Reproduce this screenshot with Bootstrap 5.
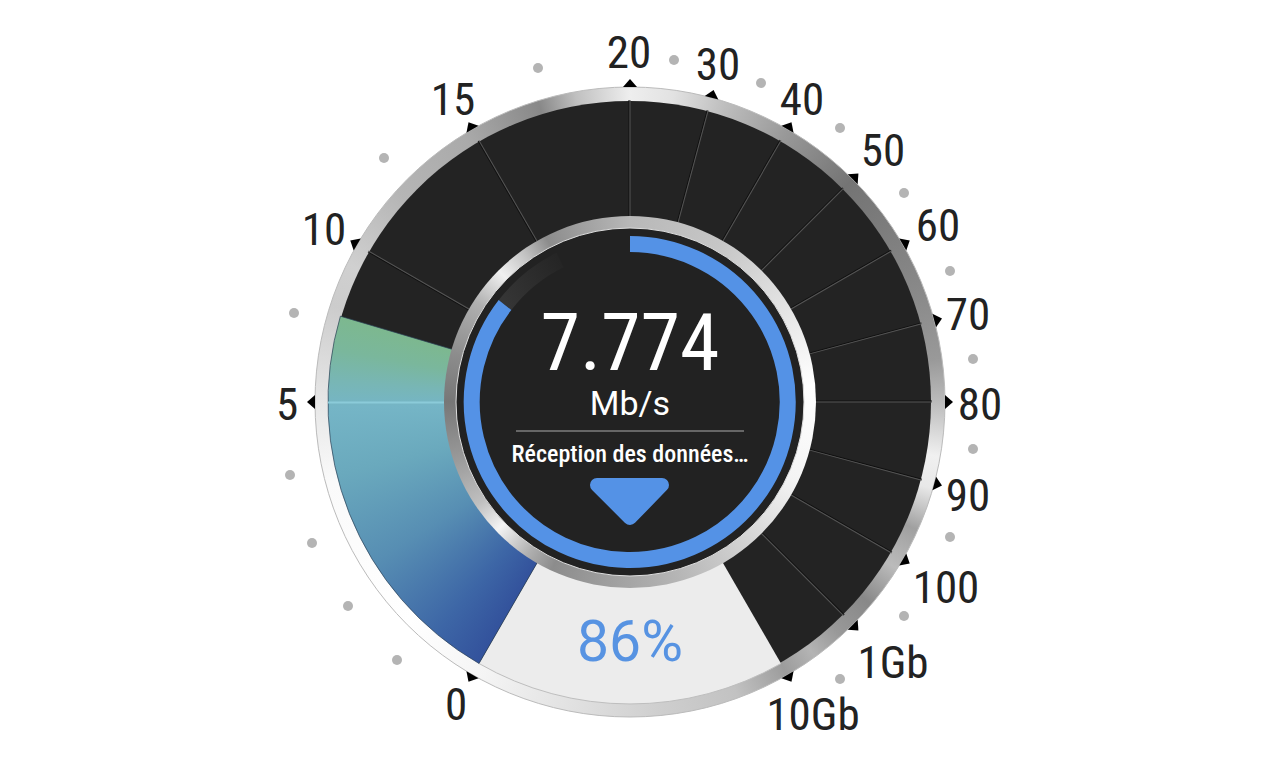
<!DOCTYPE html>
<html lang="fr">
<head>
<meta charset="utf-8">
<meta name="viewport" content="width=device-width, initial-scale=1">
<title>Test de débit</title>
<link href="https://cdn.jsdelivr.net/npm/bootstrap@5.3.0/dist/css/bootstrap.min.css" rel="stylesheet">
<style>
  .speed-dial { display: block; }
  .scale-label { font-family: "Roboto Condensed", "Liberation Sans Narrow", sans-serif; font-size: 45px; fill: #222; text-anchor: middle; }
  .metal { width: 100%; height: 100%; }
  .metal-outer { background: conic-gradient(#eee 0deg, #e2e2e2 8deg, #bdbdbd 18deg, #999 30deg, #747474 45deg, #7c7c7c 55deg, #8a8a8a 70deg, #999 82deg, #bbb 90deg, #f0f0f0 100deg, #e8e8e8 106deg, #a0a0a0 114deg, #bbb 122deg, #888 130deg, #999 138deg, #b4b4b4 144deg, #9c9c9c 150deg, #c2c2c2 160deg, #cfcfcf 175deg, #e0e0e0 190deg, #f4f4f4 208deg, #fff 225deg, #fafafa 255deg, #e4e4e4 272deg, #ccc 288deg, #d0d0d0 296deg, #b5b5b5 312deg, #aaa 328deg, #888 343deg, #c0c0c0 350deg, #eee 360deg); }
  .metal-hub { background: conic-gradient(#b8b8b8 0deg, #c6c6c6 30deg, #e0e0e0 55deg, #fff 85deg, #f4f4f4 115deg, #d4d4d4 140deg, #b5b5b5 165deg, #a0a0a0 185deg, #8c8c8c 205deg, #b0b0b0 214deg, #f4f4f4 226deg, #c0c0c0 236deg, #999 252deg, #777 270deg, #8c8c8c 285deg, #b0b0b0 303deg, #f0f0f0 315deg, #c0c0c0 325deg, #8c8c8c 333deg, #a0a0a0 345deg, #b8b8b8 360deg); }
  .level { background: conic-gradient(#33529c 210deg, #3d66a6 220deg, #578eb3 238deg, #6aa9bd 256deg, #75b5c6 269deg, #78b6b5 274deg, #7ab79c 280deg, #7db88e 287deg); }
  .readout { font-family: "Roboto Condensed", Roboto, sans-serif; color: #fff; }
  .rate { font-size: 80px; line-height: 82px; }
  .unit { font-family: Roboto, sans-serif; font-size: 34px; line-height: 38px; }
  .rule { width: 228px; height: 2px; background: #666; }
  .phase { font-size: 24px; line-height: 28px; font-weight: 500; }
  .percent { font-family: Roboto, sans-serif; font-size: 57px; fill: #5793e2; text-anchor: middle; }
</style>
</head>
<body class="bg-white">
<main class="container-fluid p-0">
<svg class="speed-dial w-100 h-auto" viewBox="0 0 1280 758" role="img" aria-label="Débit 7.774 Mb/s">
  <defs>
    <clipPath id="sector"><path d="M302 302 151 563.500A302 302 0 0 1 12.400 216.200Z"/></clipPath>
    <linearGradient id="track" gradientUnits="userSpaceOnUse" x1="505" y1="300" x2="560" y2="262">
      <stop offset="0" stop-color="#353535"/><stop offset="1" stop-color="#252525"/>
    </linearGradient>
    <path id="tick" d="M-7 -315 0 -323 7 -315Z"/>
    <g id="spoke"><path d="M-1 -186V-302" stroke="#101010"/><path d="M0 -186V-302" stroke="#555"/></g>
  </defs>

  <!-- Outer bezel -->
  <foreignObject x="315" y="87" width="630" height="630"><div class="metal metal-outer rounded-circle"></div></foreignObject>
  <circle cx="630" cy="402" r="315" fill="none" stroke="#bbb"/>

  <!-- Dial face -->
  <g transform="translate(630 402)">
    <circle r="301" fill="#232323"/>
    <path d="M0 0-151 261.500A302 302 0 0 0 151 261.500Z" fill="#ececec"/>
    <path d="M-151 261.500A302 302 0 0 0 151 261.500" fill="none" stroke="#bebebe"/>
  </g>

  <!-- Measured level, from 0 to the current rate -->
  <g transform="translate(328 100)" clip-path="url(#sector)">
    <foreignObject width="604" height="604"><div class="metal level"></div></foreignObject>
  </g>
  <path d="M630 402 479 663.500A302 302 0 0 1 340.400 316.200Z" fill="none" stroke="#2b4055" stroke-opacity=".7"/>
  <path d="M328 402.500H445" stroke="#8bcbd9" stroke-width="2"/>

  <!-- Spokes and ticks -->
  <g transform="translate(630 402)">
    <use href="#spoke" transform="rotate(300)"/><use href="#spoke" transform="rotate(330)"/><use href="#spoke"/>
    <use href="#spoke" transform="rotate(15)"/><use href="#spoke" transform="rotate(30)"/><use href="#spoke" transform="rotate(45)"/>
    <use href="#spoke" transform="rotate(60)"/><use href="#spoke" transform="rotate(75)"/><use href="#spoke" transform="rotate(90)"/>
    <use href="#spoke" transform="rotate(105)"/><use href="#spoke" transform="rotate(120)"/><use href="#spoke" transform="rotate(135)"/>
    <use href="#tick" transform="rotate(210)"/><use href="#tick" transform="rotate(270)"/><use href="#tick" transform="rotate(300)"/>
    <use href="#tick" transform="rotate(330)"/><use href="#tick"/><use href="#tick" transform="rotate(15)"/>
    <use href="#tick" transform="rotate(30)"/><use href="#tick" transform="rotate(45)"/><use href="#tick" transform="rotate(60)"/>
    <use href="#tick" transform="rotate(75)"/><use href="#tick" transform="rotate(90)"/><use href="#tick" transform="rotate(105)"/>
    <use href="#tick" transform="rotate(120)"/><use href="#tick" transform="rotate(135)"/><use href="#tick" transform="rotate(150)"/>
  </g>

  <!-- Intermediate dots -->
  <g fill="#b4b4b4">
    <circle cx="397" cy="660" r="5"/><circle cx="348" cy="606" r="5"/><circle cx="312" cy="543" r="5"/><circle cx="290" cy="475" r="5"/>
    <circle cx="294" cy="313" r="5"/><circle cx="384" cy="158" r="5"/><circle cx="538" cy="68" r="5"/><circle cx="674" cy="60" r="5"/>
    <circle cx="761" cy="83" r="5"/><circle cx="840" cy="128" r="5"/><circle cx="904" cy="193" r="5"/><circle cx="950" cy="271" r="5"/>
    <circle cx="973" cy="359" r="5"/><circle cx="973" cy="449" r="5"/><circle cx="950" cy="537" r="5"/><circle cx="904" cy="616" r="5"/><circle cx="840" cy="679" r="5"/>
  </g>

  <!-- Scale, in Mb/s -->
  <g class="scale-label">
    <text x="456" y="720">0</text><text x="287" y="420">5</text><text x="324" y="245">10</text><text x="453" y="115">15</text>
    <text x="629" y="68">20</text><text x="718" y="80">30</text><text x="802" y="115">40</text><text x="883" y="166">50</text>
    <text x="938" y="241">60</text><text x="968" y="330">70</text><text x="980" y="420">80</text><text x="968" y="511">90</text>
    <text x="946" y="603">100</text><text x="893" y="678">1Gb</text><text x="813" y="730">10Gb</text>
  </g>

  <!-- Hub -->
  <foreignObject x="444" y="216" width="372" height="372"><div class="metal metal-hub rounded-circle"></div></foreignObject>
  <circle cx="630" cy="402" r="174" fill="#222" stroke="#ddd"/>
  <path d="M505 305A158 158 0 0 1 560 260" fill="none" stroke="url(#track)" stroke-width="16"/>
  <path d="M630 244A158 158 0 1 1 505 305" fill="none" stroke="#5492e6" stroke-width="16"/>
  <foreignObject x="480" y="302" width="300" height="236">
    <div class="readout d-flex flex-column align-items-center text-center">
      <div class="rate">7.774</div>
      <div class="unit">Mb/s</div>
      <div class="rule my-2"></div>
      <div class="phase text-nowrap">Réception des données…</div>
    </div>
  </foreignObject>
  <path d="M597 485H662L630 518Z" fill="#5492e6" stroke="#5492e6" stroke-width="14" stroke-linejoin="round"/>
  <text class="percent" x="630" y="661">86%</text>
</svg>
</main>
<script src="https://cdn.jsdelivr.net/npm/bootstrap@5.3.0/dist/js/bootstrap.bundle.min.js"></script>
</body>
</html>
